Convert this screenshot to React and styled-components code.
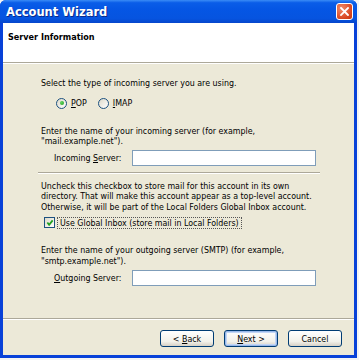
import React from "react";
import styled, { createGlobalStyle } from "styled-components";

const Global = createGlobalStyle`
  html, body { margin: 0; padding: 0; background: #f4f4f4; }
  body { font-family: "DejaVu Sans Condensed", "Liberation Sans", Arial, sans-serif; font-size: 8.8px; color: #000; }
`;

const Window = styled.div`
  width: 357px;
  height: 358px;
  box-sizing: border-box;
  display: flex;
  flex-direction: column;
  background: #0841d8;
  border-radius: 6px 6px 0 0;
  overflow: hidden;
`;

const TitleBar = styled.div`
  height: 23px;
  flex: none;
  display: flex;
  align-items: center;
  justify-content: space-between;
  padding: 0 4px 0 6px;
  background: linear-gradient(#3a8cf6 0%, #0a5de8 12%, #0556e4 40%, #0654e0 80%, #0646cc 100%);
`;

const Title = styled.span`
  color: #fff;
  font-family: "DejaVu Sans", Verdana, sans-serif;
  font-weight: bold;
  font-size: 11.5px;
  text-shadow: 1px 1px 0 #0a2a8a;
`;

const CloseButton = styled.div`
  width: 15px;
  height: 15px;
  border: 1px solid #fff;
  border-radius: 3px;
  background: radial-gradient(circle at 30% 30%, #f08a6a, #d8451f 70%, #c13812);
  display: flex;
  align-items: center;
  justify-content: center;
`;

const Frame = styled.div`
  flex: 1;
  margin: 0 3px 3px 3px;
  display: flex;
  flex-direction: column;
  background: #ece9d8;
`;

const Header = styled.div`
  height: 40px;
  flex: none;
  background: #fff;
  border-bottom: 1px solid #aca899;
  padding: 9px 0 0 5px;
  box-sizing: border-box;
  font-weight: bold;
  font-size: 9px;
`;

const Body = styled.div`
  flex: 1;
  padding: 14px 37px 0 38px;
  display: flex;
  flex-direction: column;
  border-top: 1px solid #fff;
`;

const Para = styled.p`
  margin: ${(p) => p.$mt || 0}px 0 0 0;
  line-height: 10.5px;
  white-space: nowrap;
`;

const RadioRow = styled.div`
  display: flex;
  align-items: center;
  margin: 8px 0 0 15px;
  height: 13px;
`;

const RadioItem = styled.label`
  display: flex;
  align-items: center;
  gap: 4px;
  margin-right: 11px;
`;

const RadioCircle = styled.span`
  box-sizing: border-box;
  width: 11px;
  height: 11px;
  border-radius: 50%;
  border: 1px solid #1c5180;
  background: linear-gradient(135deg, #dcd9c9, #fff);
  display: flex;
  align-items: center;
  justify-content: center;
  &::after {
    content: "";
    width: 4px;
    height: 4px;
    border-radius: 50%;
    background: ${(p) => (p.$on ? "radial-gradient(circle at 35% 35%, #5fd35f, #21a121)" : "transparent")};
  }
`;

const U = styled.span`
  text-decoration: underline;
`;

const FieldRow = styled.div`
  display: flex;
  align-items: center;
  margin-top: ${(p) => p.$mt || 0}px;
  padding-left: 13px;
`;

const FieldLabel = styled.span`
  width: 78px;
`;

const TextBox = styled.div`
  width: 182px;
  height: 14px;
  border: 1px solid #7f9db9;
  background: #fff;
`;

const Separator = styled.div`
  height: 1px;
  background: #aca899;
  box-shadow: 0 1px 0 #fff;
  margin: ${(p) => p.$m};
`;

const CheckRow = styled.div`
  display: flex;
  align-items: center;
  gap: 2px;
  height: 13px;
  margin: 4px 0 0 3px;
`;

const CheckBox = styled.span`
  box-sizing: border-box;
  width: 11px;
  height: 11px;
  border: 1px solid #1c5180;
  background: linear-gradient(135deg, #dcd9c9, #fff);
  display: flex;
  align-items: center;
  justify-content: center;
`;

const FocusLabel = styled.span`
  border: 1px dotted #555;
  padding: 0 2px;
  line-height: 10px;
`;

const Footer = styled.div`
  flex: none;
  height: 36px;
  display: flex;
  justify-content: flex-end;
  align-items: flex-start;
  gap: 10px;
  padding: 11px 12px 0 0;
  box-sizing: border-box;
`;

const Button = styled.button`
  width: 54px;
  height: 17px;
  padding: 0;
  font-family: inherit;
  font-size: 8.8px;
  color: #000;
  border: 1px solid #003c74;
  border-radius: 3px;
  background: linear-gradient(#ffffff, #f2f1ea 70%, #d6d0c5);
  box-shadow: ${(p) => (p.$focus ? "inset 0 0 0 1px #98b8ea, inset 0 0 0 2px #c2d6f5" : "none")};
`;

export default function App() {
  return (
    <>
      <Global />
      <Window>
        <TitleBar>
          <Title>Account Wizard</Title>
          <CloseButton>
            <svg width="9" height="9" viewBox="0 0 9 9">
              <path d="M1 1 L8 8 M8 1 L1 8" stroke="#fff" strokeWidth="1.8" strokeLinecap="square" />
            </svg>
          </CloseButton>
        </TitleBar>
        <Frame>
          <Header>Server Information</Header>
          <Body>
            <Para>Select the type of incoming server you are using.</Para>
            <RadioRow>
              <RadioItem>
                <RadioCircle $on />
                <span><U>P</U>OP</span>
              </RadioItem>
              <RadioItem>
                <RadioCircle />
                <span><U>I</U>MAP</span>
              </RadioItem>
            </RadioRow>
            <Para $mt={16}>
              Enter the name of your incoming server (for example,
              <br />
              "mail.example.net").
            </Para>
            <FieldRow $mt={3}>
              <FieldLabel>
                Incoming <U>S</U>erver:
              </FieldLabel>
              <TextBox />
            </FieldRow>
            <Separator $m="6px -3px 8px -3px" />
            <Para>
              Uncheck this checkbox to store mail for this account in its own
              <br />
              directory. That will make this account appear as a top-level account.
              <br />
              Otherwise, it will be part of the Local Folders Global Inbox account.
            </Para>
            <CheckRow>
              <CheckBox>
                <svg width="8" height="8" viewBox="0 0 9 9">
                  <path d="M1.5 4 L3.5 6.5 L7.5 1.5" stroke="#21a121" strokeWidth="2" fill="none" />
                </svg>
              </CheckBox>
              <FocusLabel>Use Global Inbox (store mail in Local Folders)</FocusLabel>
            </CheckRow>
            <Para $mt={16}>
              Enter the name of your outgoing server (SMTP) (for example,
              <br />
              "smtp.example.net").
            </Para>
            <FieldRow $mt={4}>
              <FieldLabel>
                <U>O</U>utgoing Server:
              </FieldLabel>
              <TextBox />
            </FieldRow>
          </Body>
          <Separator $m="0" />
          <Footer>
            <Button>&lt; <U>B</U>ack</Button>
            <Button $focus>
              <U>N</U>ext &gt;
            </Button>
            <Button>Cancel</Button>
          </Footer>
        </Frame>
      </Window>
    </>
  );
}
